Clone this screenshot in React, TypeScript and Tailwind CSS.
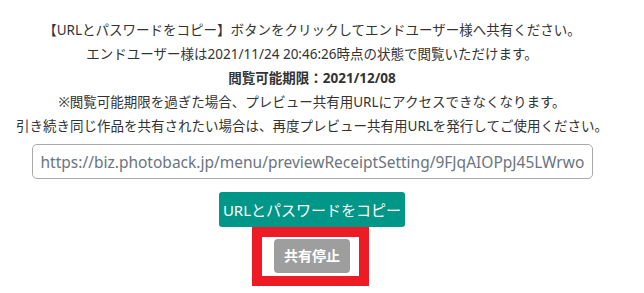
import React from 'react';

const font = { fontFamily: '"Noto Sans", "Noto Sans CJK JP", sans-serif' };

export default function App() {
  return (
    <div className="w-[644px] h-[293px] bg-white overflow-hidden" style={font}>
      <div className="w-[624px] flex flex-col items-center pt-[18px] text-[#333] text-[13.5px] leading-[24px]">
        <p>【URLとパスワードをコピー】ボタンをクリックしてエンドユーザー様へ共有ください。</p>
        <p>エンドユーザー様は2021/11/24 20:46:26時点の状態で閲覧いただけます。</p>
        <p className="font-bold">閲覧可能期限：2021/12/08</p>
        <p>※閲覧可能期限を過ぎた場合、プレビュー共有用URLにアクセスできなくなります。</p>
        <p>引き続き同じ作品を共有されたい場合は、再度プレビュー共有用URLを発行してご使用ください。</p>

        <input
          readOnly
          value="https://biz.photoback.jp/menu/previewReceiptSetting/9FJqAIOPpJ45LWrwo"
          className="mt-[6px] w-[561px] h-[35px] px-[8px] border border-[#aaa] rounded-[5px] text-[15.5px] text-[#6b7480] outline-none"
          style={font}
        />

        <button className="mt-[13px] w-[186px] h-[35px] bg-[#009688] rounded-[3px] text-white text-[15px]">
          URLとパスワードをコピー
        </button>

        <div className="border-[10px] border-[#ed1c24] w-[117px] h-[59px] pl-[12px] pt-[2px] ml-[-3px]">
          <button className="w-[76px] h-[34px] bg-[#9e9e9e] rounded-[4px] text-white text-[14px] font-bold">
            共有停止
          </button>
        </div>
      </div>
    </div>
  );
}
